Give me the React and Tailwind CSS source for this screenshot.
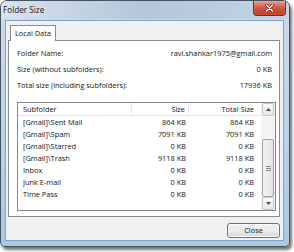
import React from "react";

const rows = [
  ["[Gmail]\\Sent Mail", "864 KB", "864 KB"],
  ["[Gmail]\\Spam", "7091 KB", "7091 KB"],
  ["[Gmail]\\Starred", "0 KB", "0 KB"],
  ["[Gmail]\\Trash", "9118 KB", "9118 KB"],
  ["Inbox", "0 KB", "0 KB"],
  ["Junk E-mail", "0 KB", "0 KB"],
  ["Time Pass", "0 KB", "0 KB"],
];

export default function App() {
  return (
    <div
      className="w-[294px] h-[252px] bg-white overflow-hidden text-[#141414]"
      style={{ fontFamily: '"Open Sans", "Noto Sans", sans-serif' }}
    >
      <div className="w-[290px] h-[247px] flex flex-col rounded-t-[7px] rounded-b-[5px] border border-[#46535f] bg-gradient-to-b from-[#cddbe9] via-[#bcd3ea] to-[#a9c7e8] shadow-[2px_3px_3px_rgba(0,0,0,0.55)]">
        <div className="h-[18px] flex justify-between rounded-t-[6px] bg-gradient-to-r from-[#d8e3ee] via-[#b2c6da] to-[#c2d4e6]">
          <div className="pl-[2px] pt-[2px] text-[8.2px] leading-[14px] text-[#111] [text-shadow:0_0_4px_rgba(255,255,255,0.9)]">
            Folder Size
          </div>
          <div className="mr-[3px] w-[33px] h-[15px] rounded-b-[4px] border border-t-0 border-[#6b3023] bg-gradient-to-b from-[#e6a08f] via-[#cf5540] to-[#c23d24] flex items-center justify-center shadow-[inset_0_0_1px_rgba(255,255,255,0.8)]">
            <svg width="9" height="8" viewBox="0 0 9 8">
              <path d="M1.5 1 L7.5 7 M7.5 1 L1.5 7" stroke="#5a1d12" strokeWidth="2.6" strokeLinecap="round" />
              <path d="M1.5 1 L7.5 7 M7.5 1 L1.5 7" stroke="#ffffff" strokeWidth="1.5" strokeLinecap="round" />
            </svg>
          </div>
        </div>
        <div className="flex-1 mt-[1px] ml-[4px] mr-[5px] mb-[5px] border border-[#87a3c2] bg-[#f0f0f0] flex flex-col pt-[4px] pl-[2px] pr-[3px]">
          <div className="flex">
            <div className="ml-[2px] px-[4px] h-[16px] border border-b-0 border-[#898c95] bg-white text-[7.4px] leading-[15px] relative z-10 -mb-[1px]">
              Local Data
            </div>
          </div>
          <div className="h-[177px] border border-[#898c95] bg-white flex flex-col pl-[8px] pr-[3px] pt-[5px] text-[7.4px]">
            <div className="h-[16px] flex items-center justify-between pr-[4px]">
              <span>Folder Name:</span>
              <span>ravi.shankar1975@gmail.com</span>
            </div>
            <div className="h-[16px] flex items-center justify-between pr-[4px]">
              <span>Size (without subfolders):</span>
              <span>0 KB</span>
            </div>
            <div className="h-[16px] flex items-center justify-between pr-[4px]">
              <span>Total size (including subfolders):</span>
              <span>17936 KB</span>
            </div>
            <div className="mt-[8px] h-[109px] border border-[#828790] flex">
              <div className="flex-1 flex flex-col">
                <div className="h-[13px] flex border-b border-[#e5e5e5] leading-[12px]">
                  <div className="w-[114px] pl-[5px] border-r border-[#e5e5e5]">Subfolder</div>
                  <div className="w-[57px] pr-[3px] text-right border-r border-[#e5e5e5]">Size</div>
                  <div className="w-[70px] pr-[5px] text-right">Total Size</div>
                </div>
                {rows.map((r) => (
                  <div key={r[0]} className="h-[12px] flex leading-[12px]">
                    <div className="w-[114px] pl-[5px]">{r[0]}</div>
                    <div className="w-[57px] pr-[3px] text-right">{r[1]}</div>
                    <div className="w-[70px] pr-[5px] text-right">{r[2]}</div>
                  </div>
                ))}
              </div>
              <div className="w-[14px] flex flex-col bg-[#f4f4f4]">
                <div className="h-[13px] mx-[1px] rounded-[2px] border border-[#c6c6c6] bg-gradient-to-b from-[#fafafa] to-[#e6e6e6] flex items-center justify-center">
                  <svg width="5" height="3" viewBox="0 0 5 3"><path d="M0 3 L2.5 0 L5 3 Z" fill="#4d4d4d" /></svg>
                </div>
                <div className="h-[23px]" />
                <div className="h-[58px] mx-[1px] rounded-[2px] border border-[#a3a3a3] bg-gradient-to-r from-[#f3f3f3] to-[#e2e2e2] flex items-center justify-center">
                  <div className="w-[5px] flex flex-col gap-[1px]">
                    <div className="h-[1px] bg-[#8a8a8a]" />
                    <div className="h-[1px] bg-[#8a8a8a]" />
                    <div className="h-[1px] bg-[#8a8a8a]" />
                  </div>
                </div>
                <div className="h-[13px] mx-[1px] rounded-[2px] border border-[#c6c6c6] bg-gradient-to-b from-[#fafafa] to-[#e6e6e6] flex items-center justify-center">
                  <svg width="5" height="3" viewBox="0 0 5 3"><path d="M0 0 L2.5 3 L5 0 Z" fill="#4d4d4d" /></svg>
                </div>
              </div>
            </div>
          </div>
          <div className="flex justify-end mt-[6px]">
            <div className="w-[53px] h-[15px] rounded-[3px] border border-[#707070] bg-gradient-to-b from-[#f2f2f2] via-[#ebebeb] to-[#d6d6d6] flex items-center justify-center text-[7.4px] shadow-[inset_0_0_0_1px_#fcfcfc]">
              Close
            </div>
          </div>
        </div>
      </div>
    </div>
  );
}
